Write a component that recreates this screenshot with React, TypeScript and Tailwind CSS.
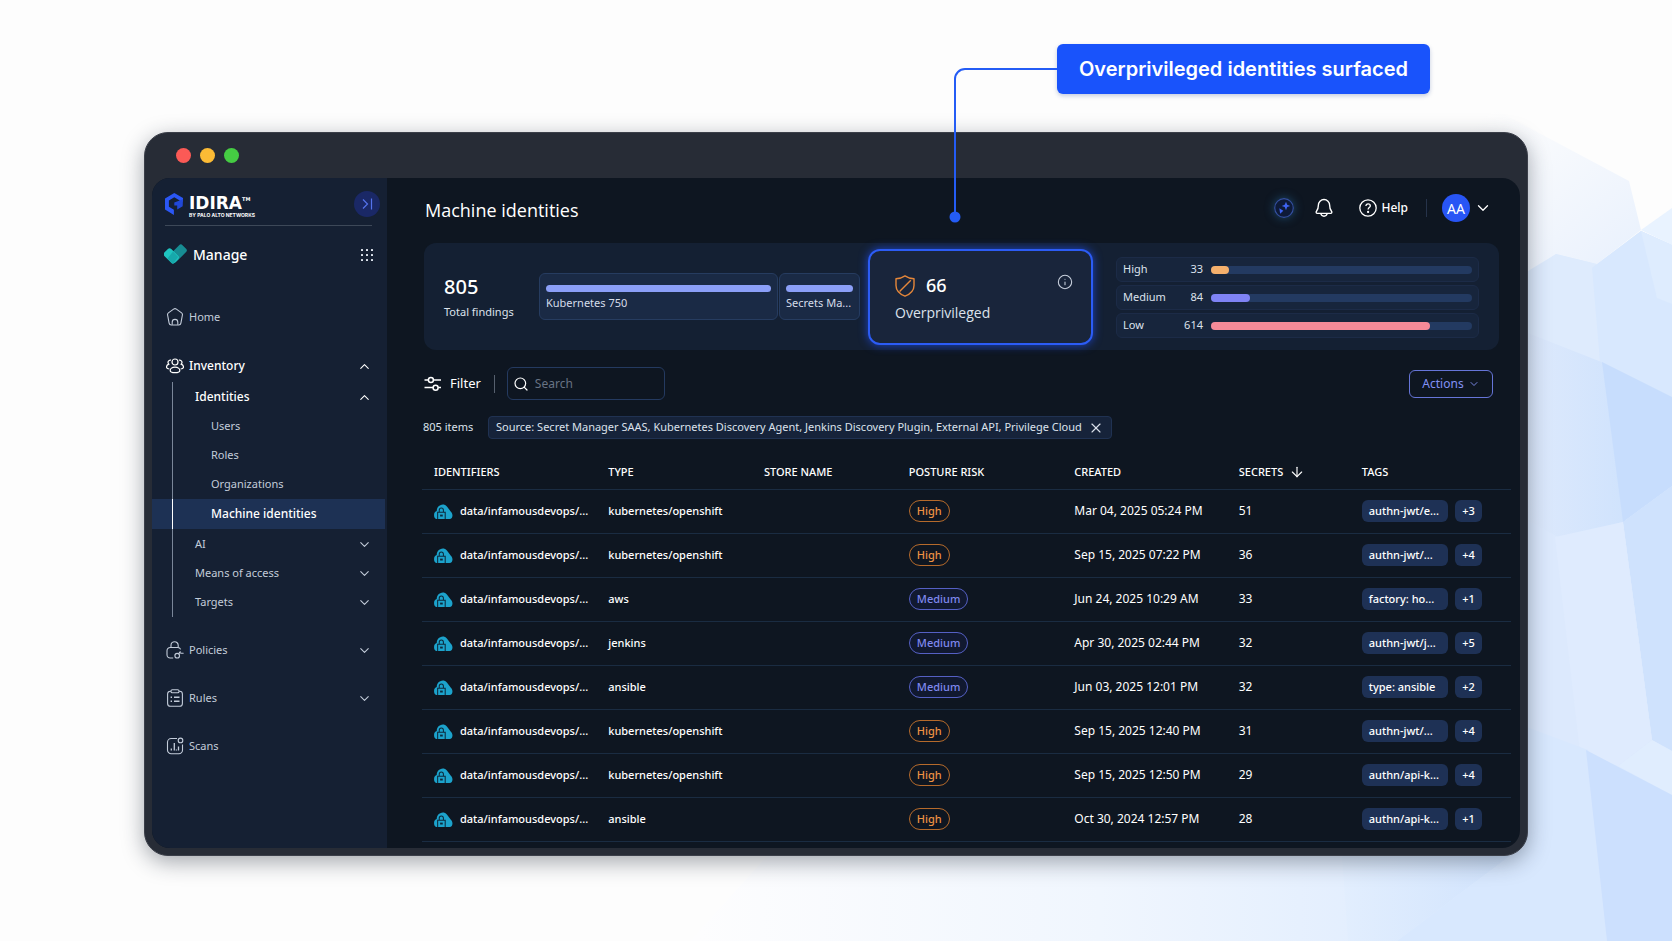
import React from 'react';
import { ArrowDown, ChevronDown, ChevronUp, Info, Search, X } from 'lucide-react';
import { clsx } from 'clsx';

type Risk = 'High' | 'Medium';

interface Identity {
  type: string;
  risk: Risk;
  created: string;
  secrets: number;
  tag: string;
  more: number;
}

const identities: Identity[] = [
  { type: 'kubernetes/openshift', risk: 'High', created: 'Mar 04, 2025 05:24 PM', secrets: 51, tag: 'authn-jwt/e...', more: 3 },
  { type: 'kubernetes/openshift', risk: 'High', created: 'Sep 15, 2025 07:22 PM', secrets: 36, tag: 'authn-jwt/...', more: 4 },
  { type: 'aws', risk: 'Medium', created: 'Jun 24, 2025 10:29 AM', secrets: 33, tag: 'factory: ho...', more: 1 },
  { type: 'jenkins', risk: 'Medium', created: 'Apr 30, 2025 02:44 PM', secrets: 32, tag: 'authn-jwt/j...', more: 5 },
  { type: 'ansible', risk: 'Medium', created: 'Jun 03, 2025 12:01 PM', secrets: 32, tag: 'type: ansible', more: 2 },
  { type: 'kubernetes/openshift', risk: 'High', created: 'Sep 15, 2025 12:40 PM', secrets: 31, tag: 'authn-jwt/...', more: 4 },
  { type: 'kubernetes/openshift', risk: 'High', created: 'Sep 15, 2025 12:50 PM', secrets: 29, tag: 'authn/api-k...', more: 4 },
  { type: 'ansible', risk: 'High', created: 'Oct 30, 2024 12:57 PM', secrets: 28, tag: 'authn/api-k...', more: 1 },
];

const severities = [
  { label: 'High', count: 33, percent: 7, bar: 'bg-[#f5b06c]' },
  { label: 'Medium', count: 84, percent: 15, bar: 'bg-[#7f83f5]' },
  { label: 'Low', count: 614, percent: 84, bar: 'bg-[#f58a98]' },
];

/* ---------- Icons ---------- */

const HomeIcon = () => (
  <svg viewBox="0 0 18 18" className="size-[18px] shrink-0" fill="none" stroke="currentColor" strokeWidth="1.1">
    <path d="M7.6 1.1a2.4 2.4 0 0 1 2.8 0l5.2 3.8a2 2 0 0 1 .8 2.1l-1.5 8.2a2.2 2.2 0 0 1-2.2 1.8H5.3a2.2 2.2 0 0 1-2.2-1.8L1.6 7a2 2 0 0 1 .8-2.1z" />
    <path d="M6.2 16.8v-2.6a2.8 2.8 0 0 1 5.6 0v2.6" />
  </svg>
);

const UsersIcon = () => (
  <svg viewBox="0 0 18 18" className="size-[18px] shrink-0" fill="none" stroke="currentColor" strokeWidth="1.2">
    <circle cx="9" cy="5" r="3" />
    <path d="M9 10.2c3 0 4.8 1.7 4.8 3.2S12 15.6 9 15.6s-4.8-.7-4.8-2.2 1.8-3.2 4.8-3.2z" />
    <path d="M5 3.2a2.3 2.3 0 0 0-2.2 3.9c-1.5.6-2.3 1.7-2.3 2.9 0 1.4 1.2 1.9 2.9 2M13 3.2a2.3 2.3 0 0 1 2.2 3.9c1.5.6 2.3 1.7 2.3 2.9 0 1.4-1.2 1.9-2.9 2" />
  </svg>
);

const PoliciesIcon = () => (
  <svg viewBox="0 0 18 18" className="size-[18px] shrink-0" fill="none" stroke="currentColor" strokeWidth="1.1">
    <path d="M5 6.5V4.3a3.6 3.6 0 0 1 7.2 0v2.2" />
    <path d="M7.2 17H4.2A3.2 3.2 0 0 1 1 13.8V9.700a3.2 3.2 0 0 1 3.2-3.2h7.600a3.2 3.2 0 0 1 2.900 1.900" />
    <circle cx="11.2" cy="14.7" r="2.3" />
    <path d="M12.5 12.8l2-2.5M13 11.6c1.5 0 1.8 1 4.6.6" />
  </svg>
);

const RulesIcon = () => (
  <svg viewBox="0 0 18 18" className="size-[18px] shrink-0" fill="none" stroke="currentColor" strokeWidth="1.1">
    <path d="M5 2.2h-.6a2.8 2.8 0 0 0-2.8 2.8v9.4a2.8 2.8 0 0 0 2.8 2.8h9.2a2.8 2.8 0 0 0 2.8-2.8V5a2.8 2.8 0 0 0-2.8-2.8H13" />
    <rect x="5" y="0.8" width="8" height="3" rx="1.3" />
    <path d="M8 8.3h5.5M8 12.2h5.5M4.6 8.3h1.4M4.6 12.2h1.4" strokeWidth="1.4" />
  </svg>
);

const ScansIcon = () => (
  <svg viewBox="0 0 18 18" className="size-[18px] shrink-0" fill="none" stroke="currentColor" strokeWidth="1.1">
    <path d="M11 1.5H5.2A3.7 3.7 0 0 0 1.5 5.2v7.9a3.7 3.7 0 0 0 3.7 3.7h7.6a3.7 3.7 0 0 0 3.7-3.7V7.5" />
    <circle cx="14.5" cy="3.4" r="2.3" />
    <path d="M5.3 11.5v2M8.3 6v7.5M12.5 9.500v4M10.400 12.500v1" strokeWidth="1.3" />
  </svg>
);

const CloudLockIcon = () => (
  <svg viewBox="0 0 20 18" className="h-[17px] w-[19px] shrink-0">
    <path
      d="M6.6 2.4A5 5 0 0 1 13.6 3.6l4.2 5.6c2.6 2.4 2.3 7.8-1.4 7.800H3.400C.7 17 0 14.600 0 12.600 0 10.400 1.300 9 2.800 8.600 2.800 5.600 4.200 3.300 6.600 2.400z"
      fill="#1ca3cc"
    />
    <path d="M5.5 9.5V7.5a2.2 2.2 0 0 1 4.4 0v2" fill="none" stroke="#0d2a3c" strokeWidth="1.1" />
    <path d="M3.8 17V9.9h8V17" fill="none" stroke="#0d2a3c" strokeWidth="1.1" />
    <rect x="6.4" y="12.3" width="2.8" height="2" fill="#0d2a3c" />
  </svg>
);

const FilterIcon = () => (
  <svg viewBox="0 0 18 16" className="h-4 w-[18px]" fill="none" stroke="currentColor" strokeWidth="1.5">
    <path d="M0.5 4h3.8M9.5 4H17M.5 11.5H9M14.2 11.5H17" />
    <circle cx="6.9" cy="4" r="2.5" />
    <circle cx="11.6" cy="11.7" r="2.5" />
  </svg>
);

const ShieldIcon = () => (
  <svg viewBox="0 0 20 22" className="h-[22px] w-5" fill="none" stroke="#e5873a" strokeWidth="1.4" strokeLinejoin="round">
    <path d="M10 .9c2.5 1.7 5.3 2.6 9 2.9v6.7c0 4.9-3.6 8.5-9 10.7-5.4-2.2-9-5.8-9-10.7V3.800c3.700-.3 6.500-1.200 9-2.900z" />
    <path d="M15.8 5.2L4.6 16.6" />
  </svg>
);

const BellIcon = () => (
  <svg viewBox="0 0 18 20" className="h-5 w-[18px]" fill="none" stroke="currentColor" strokeWidth="1.4" strokeLinejoin="round">
    <path d="M9 1.5a5.6 5.6 0 0 0-5.6 5.6c0 3.1-.6 4.7-1.9 6.2-.7.9-.3 2.1.9 2.1h13.2c1.2 0 1.6-1.2.9-2.1-1.3-1.5-1.9-3.1-1.9-6.2A5.6 5.6 0 0 0 9 1.5z" />
    <path d="M5.8 15.7a3.3 3.3 0 0 0 6.4 0" />
  </svg>
);

const HelpIcon = () => (
  <svg viewBox="0 0 18 18" className="size-[18px]" fill="none" stroke="currentColor" strokeWidth="1.3">
    <circle cx="9" cy="9" r="8.2" />
    <path d="M6.9 7.1c0-1.4.9-2.2 2.2-2.2s2.2.8 2.2 2c0 1.6-2.2 1.7-2.2 3.5" />
    <circle cx="9.1" cy="12.9" r="0.5" fill="currentColor" />
  </svg>
);

const SparkleIcon = () => (
  <svg viewBox="0 0 20 20" className="size-5">
    <circle cx="10" cy="10" r="9.3" fill="#0e1a38" stroke="#3450a0" strokeWidth="1.2" />
    <path d="M12 3.8l1.2 2.9 3 1.2-3 1.2-1.2 3.2-1.3-3.2-3-1.2 3-1.2z" fill="#3e63f2" />
    <path d="M5.3 10.3l4 2.5-3.1 2.9z" fill="#3e63f2" />
  </svg>
);

const GridDots = () => (
  <svg viewBox="0 0 13 13" className="size-[13px]" fill="#dfe5ef">
    {[1, 6, 11].map((y) =>
      [1, 6, 11].map((x) => <rect key={`${x}-${y}`} x={x} y={y} width="2" height="2" rx="0.5" />)
    )}
  </svg>
);

const IdiraMark = () => (
  <svg viewBox="0 0 18 22" className="h-[22px] w-[18px]">
    <path d="M9.3 0L18 5v3.3l-3.3 1.9V7.5L9.3 4.2 3.9 7.5v6.3l5 3V22L0 16.4V5.4z" fill="#2b57f5" />
    <path d="M9.3 9.6l5.4-2.1 3.3-1.2-.3 6.9-5.5 3.2v-3.800H9.300z" fill="#2148d8" />
  </svg>
);

const ManageMark = () => (
  <svg viewBox="0 0 23 20" className="h-5 w-[23px]">
    <rect x="4.500" y="4.600" width="18.500" height="9.800" rx="2.400" transform="rotate(-45 13.750 9.500)" fill="#178c93" />
    <rect x="0" y="7" width="14.500" height="9.800" rx="2.400" transform="rotate(45 7.250 11.900)" fill="#1fc4c0" />
    <path d="M9 7.600l5.200 5.300-4.500 6a2 2 0 0 1-2 0L3.400 14.600z" fill="#17a8ab" />
  </svg>
);

/* ---------- Backdrop ---------- */

const Backdrop = () => (
  <svg
    aria-hidden="true"
    viewBox="0 0 1672 941"
    preserveAspectRatio="none"
    className="absolute inset-0 h-full w-full"
  >
    <defs>
      <linearGradient id="floor" x1="700" y1="0" x2="1500" y2="0" gradientUnits="userSpaceOnUse">
        <stop offset="0" stopColor="#fdfdfe" />
        <stop offset="0.5" stopColor="#f0f6fe" />
        <stop offset="1" stopColor="#dceafe" />
      </linearGradient>
      <linearGradient id="shade" x1="1342" y1="0" x2="1500" y2="0" gradientUnits="userSpaceOnUse">
        <stop offset="0" stopColor="#e2eefe" />
        <stop offset="1" stopColor="#d2e4fd" />
      </linearGradient>
      <linearGradient id="peak" x1="1480" y1="120" x2="1600" y2="270" gradientUnits="userSpaceOnUse">
        <stop offset="0" stopColor="#fdfdfd" />
        <stop offset="1" stopColor="#ebf2fd" />
      </linearGradient>
      <linearGradient id="slope" x1="1528" y1="330" x2="1625" y2="330" gradientUnits="userSpaceOnUse">
        <stop offset="0" stopColor="#dde9fc" />
        <stop offset="1" stopColor="#d0e3fd" />
      </linearGradient>
    </defs>
    <rect width="1672" height="941" fill="#fdfdfd" />
    <polygon points="1440,80 1629,181 1641,230 1597,264 1556,254 1500,290" fill="url(#peak)" />
    <polygon points="690,941 800,820 1400,820 1528,273 1556,254 1597,264 1641,231 1672,245 1672,941" fill="url(#floor)" />
    <polygon points="1500,282 1528,271 1556,254 1597,264 1600,362 1500,330" fill="#deebfd" />
    <polygon points="1641,230 1672,208 1672,245" fill="#e9f3ff" />
    <polygon points="1592,268 1641,231 1672,245 1672,397 1600,362" fill="#d8e8fe" />
    <polygon points="1641,231 1672,245 1672,304 1657,298" fill="#deecfe" />
    <polygon points="1500,322 1604,363 1625,524 1500,560" fill="url(#slope)" />
    <polygon points="1602,362 1672,397 1672,486 1623,522" fill="#c7ddfd" />
    <polygon points="1623,522 1672,486 1672,751 1652,740" fill="#cfe2fd" />
    <polygon points="1500,505 1560,538 1623,522 1652,740 1618,766 1500,722" fill="#dce9fd" />
    <polygon points="1555,537 1623,522 1652,740 1618,766 1580,752" fill="#dfebfe" />
    <polygon points="1652,740 1672,751 1672,795 1618,766" fill="#e0edfe" />
    <polygon points="1342,856 1510,856 1397,941 1348,941" fill="url(#shade)" />
    <polygon points="1500,717 1588,750 1607,941 1397,941 1510,856" fill="#d8e8fe" />
    <polygon points="1586,750 1672,795 1672,941 1607,941" fill="#cce0fe" />
  </svg>
);

/* ---------- Sidebar ---------- */

interface NavItemProps {
  icon: React.ReactNode;
  label: string;
  active?: boolean;
  chevron?: 'up' | 'down';
}

const Chevron = ({ dir }: { dir: 'up' | 'down' }) =>
  dir === 'up' ? (
    <ChevronUp className="ml-auto size-[15px]" strokeWidth={1.7} />
  ) : (
    <ChevronDown className="ml-auto size-[15px]" strokeWidth={1.7} />
  );

const NavItem = ({ icon, label, active, chevron }: NavItemProps) => (
  <a
    href="#"
    className={clsx(
      'flex h-[30px] items-center gap-[5px] pr-[15px] pl-[14px]',
      active ? 'text-[12px] font-medium text-white' : 'text-[11px] text-[#c3ccda]'
    )}
  >
    {icon}
    {label}
    {chevron && <Chevron dir={chevron} />}
  </a>
);

interface SubItemProps {
  label: string;
  nested?: boolean;
  bold?: boolean;
  selected?: boolean;
  chevron?: 'up' | 'down';
  tall?: boolean;
}

const SubItem = ({ label, nested, bold, selected, chevron, tall }: SubItemProps) => (
  <li className={clsx('mr-[2px] pl-5', selected && 'bg-[#1d3154]')}>
    <a
      href="#"
      aria-current={selected ? 'page' : undefined}
      className={clsx(
        'flex items-center border-l pr-[13px]',
        tall ? 'h-[30px]' : 'h-[29px]',
        nested ? 'pl-[38px]' : 'pl-[22px]',
        selected ? 'border-white' : 'border-[#7a8699]',
        bold ? 'text-[12px] font-medium text-white' : 'text-[11px] text-[#c3ccda]'
      )}
    >
      {label}
      {chevron && <Chevron dir={chevron} />}
    </a>
  </li>
);

const Sidebar = () => (
  <aside className="w-[235px] shrink-0 bg-[#152033]">
    <div className="mr-[15px] ml-[13px] flex h-12 items-center border-b border-[#3d4858] pt-1">
      <IdiraMark />
      <div className="ml-[6px] pt-[6px] font-['DejaVu_Sans'] font-bold text-white">
        <div className="flex items-start text-[17px] leading-[14px]">
          IDIRA<span className="text-[5px] leading-[6px]">TM</span>
        </div>
        <div className="mt-[2px] font-['Inter'] text-[5px] leading-[6px] whitespace-nowrap">BY PALO ALTO NETWORKS</div>
      </div>
      <button
        type="button"
        aria-label="Expand sidebar"
        className="-mr-2 ml-auto flex size-[26px] items-center justify-center rounded-full bg-[#1a2866] text-[#5573ec]"
      >
        <svg viewBox="0 0 12 12" className="size-3" fill="none" stroke="currentColor" strokeWidth="1.2">
          <path d="M2 1.5l4.5 4.5L2 10.5M10.5.5v11" />
        </svg>
      </button>
    </div>
    <div className="mt-[13px] mr-[14px] ml-3 flex h-[30px] items-center gap-[6px]">
      <ManageMark />
      <span className="text-[14px] font-medium text-white">Manage</span>
      <button type="button" aria-label="Switch service" className="ml-auto">
        <GridDots />
      </button>
    </div>
    <nav className="mt-[33px]">
      <NavItem icon={<HomeIcon />} label="Home" />
      <div className="mt-[19px]">
        <NavItem icon={<UsersIcon />} label="Inventory" active chevron="up" />
        <ul className="pt-px">
          <SubItem label="Identities" bold tall chevron="up" />
          <SubItem label="Users" nested />
          <SubItem label="Roles" nested />
          <SubItem label="Organizations" nested />
          <SubItem label="Machine identities" nested bold selected tall />
          <SubItem label="AI" tall chevron="down" />
          <SubItem label="Means of access" chevron="down" />
          <SubItem label="Targets" chevron="down" />
        </ul>
      </div>
      <div className="mt-[18px] flex flex-col gap-[18px]">
        <NavItem icon={<PoliciesIcon />} label="Policies" chevron="down" />
        <NavItem icon={<RulesIcon />} label="Rules" chevron="down" />
        <NavItem icon={<ScansIcon />} label="Scans" />
      </div>
    </nav>
  </aside>
);

/* ---------- Main area ---------- */

const TopBar = () => (
  <header className="flex h-[60px] items-center pr-7 pl-[38px] text-white">
    <h1 className="pt-1 font-['Open_Sans'] text-[18px]">Machine identities</h1>
    <div className="ml-auto flex items-center">
      <button type="button" aria-label="Assistant" className="rounded-full shadow-[0_0_10px_#1d4a6e]">
        <SparkleIcon />
      </button>
      <button type="button" aria-label="Notifications" className="ml-[21px]">
        <BellIcon />
      </button>
      <button type="button" className="ml-[26px] flex items-center gap-1 text-[12px] font-medium">
        <HelpIcon />
        Help
      </button>
      <span className="ml-[18px] h-[18px] w-px bg-[#26334a]" />
      <button type="button" className="ml-[15px] flex items-center gap-1">
        <span className="flex size-7 items-center justify-center rounded-full bg-[#2855f5] text-[14px]">AA</span>
        <ChevronDown className="size-[18px]" strokeWidth={1.7} />
      </button>
    </div>
  </header>
);

const SourceBar = ({ label, className }: { label: string; className: string }) => (
  <div
    className={clsx(
      'flex h-[47px] min-w-0 flex-col rounded-md border border-[#263c60] bg-[#1a2a45] px-[6px] pt-[11px] text-[11px] text-[#d5dcea]',
      className
    )}
  >
    <span className="h-[7px] shrink-0 rounded-full bg-[#8b9ff8]" />
    <span className="mt-[3px] leading-4 whitespace-nowrap">{label}</span>
  </div>
);

const Summary = () => (
  <section className="mt-[5px] mr-[21px] ml-[37px] flex h-[107px] items-center rounded-xl bg-[#142033] pr-5 pl-5">
    <div className="w-[95px] shrink-0 pt-1">
      <div className="text-[20px] leading-6 font-medium text-white">805</div>
      <div className="mt-[3px] text-[11px] leading-5 text-[#dce2ec]">Total findings</div>
    </div>
    <div className="grid flex-1 grid-cols-[240fr_89fr_248fr_363fr] items-center">
      <SourceBar label="Kubernetes 750" className="mr-px" />
      <SourceBar label="Secrets Ma..." className="mr-2" />
      <div className="mr-[23px] h-24 rounded-xl border-2 border-[#2c5cf5] bg-[#19253b] pt-[23px] pr-[18px] pl-[25px] shadow-[0_0_10px_#1c44c8]">
        <div className="flex h-6 items-center">
          <ShieldIcon />
          <span className="ml-[11px] text-[18px] font-medium text-white">66</span>
          <button type="button" aria-label="About overprivileged identities" className="ml-auto self-start text-[#c9d1de]">
            <Info className="size-4" strokeWidth={1.6} />
          </button>
        </div>
        <div className="mt-[5px] font-['Open_Sans'] text-[14px] leading-5 text-[#dce2ec]">Overprivileged</div>
      </div>
      <div className="flex flex-col gap-[3px] pt-[2px]">
        {severities.map((item) => (
          <div
            key={item.label}
            className="flex h-[25px] items-center rounded-md border border-[#1c2b47] bg-[#17253c] px-[6px] text-[11px] text-[#dce2ec]"
          >
            <span className="w-[50px]">{item.label}</span>
            <span className="w-[30px] text-right">{item.count}</span>
            <span className="ml-2 h-2 flex-1 rounded-full bg-[#233a61]">
              <span className={clsx('block h-2 rounded-full', item.bar)} style={{ width: `${item.percent}%` }} />
            </span>
          </div>
        ))}
      </div>
    </div>
  </section>
);

const Toolbar = () => (
  <div className="mt-[17px] mr-[27px] ml-[37px] flex h-[33px] items-center">
    <button type="button" className="flex items-center gap-2 text-[13px] text-white">
      <FilterIcon />
      Filter
    </button>
    <span className="ml-[13px] h-[18px] w-px bg-[#56606e]" />
    <label className="ml-3 flex h-[33px] w-[158px] items-center gap-[6px] rounded-md border border-[#243a60] px-[5px]">
      <Search className="size-4 shrink-0 text-white" strokeWidth={1.8} />
      <input
        type="text"
        aria-label="Search"
        placeholder="Search"
        className="w-full min-w-0 bg-transparent text-[12px] text-white outline-none placeholder:text-[#687384]"
      />
    </label>
    <button
      type="button"
      className="ml-auto flex h-7 w-[84px] items-center justify-center gap-1 rounded-md border border-[#6675d8] text-[12px] text-[#8291f5]"
    >
      Actions
      <ChevronDown className="size-3" strokeWidth={1.8} />
    </button>
  </div>
);

const Filters = () => (
  <div className="mt-4 ml-9 flex h-[23px] items-center text-[11px] text-[#dce2ec]">
    <span className="w-[65px]">805 items</span>
    <span className="flex h-[23px] items-center gap-[6px] rounded border border-[#203252] bg-[#16233a] px-[7px] whitespace-nowrap">
      Source: Secret Manager SAAS, Kubernetes Discovery Agent, Jenkins Discovery Plugin, External API, Privilege Cloud
      <button type="button" aria-label="Remove source filter">
        <X className="size-4" strokeWidth={1.7} />
      </button>
    </span>
  </div>
);

const RiskBadge = ({ risk }: { risk: Risk }) => (
  <span
    className={clsx(
      'inline-flex h-[22px] items-center rounded-full border px-[7px] text-[11px]',
      risk === 'High' ? 'border-[#b56a2b] text-[#ec9244]' : 'border-[#5560c4] bg-[#111930] text-[#7f88ee]'
    )}
  >
    {risk}
  </span>
);

const IdentityTable = () => (
  <div className="mt-4 mr-[9px] ml-[35px]">
    <table className="w-full table-fixed text-left text-[11px] text-white">
      <colgroup>
        <col className="w-[16%]" />
        <col className="w-[14.3%]" />
        <col className="w-[13.3%]" />
        <col className="w-[15.2%]" />
        <col className="w-[15.1%]" />
        <col className="w-[11.3%]" />
        <col className="w-[14.8%]" />
      </colgroup>
      <thead>
        <tr className="h-[34px] border-b border-[#1a2c42]">
          <th className="pl-3 font-medium">IDENTIFIERS</th>
          <th className="pl-3 font-medium">TYPE</th>
          <th className="pl-3 font-medium">STORE NAME</th>
          <th className="pl-3 font-medium">POSTURE RISK</th>
          <th className="pl-3 font-medium">CREATED</th>
          <th className="pl-3 font-medium" aria-sort="descending">
            <button type="button" className="flex items-center gap-[6px]">
              SECRETS
              <ArrowDown className="size-4" strokeWidth={1.7} />
            </button>
          </th>
          <th className="pl-3 font-medium">TAGS</th>
        </tr>
      </thead>
      <tbody className="font-medium">
        {identities.map((row, index) => (
          <tr key={index} className="h-11 border-b border-[#1a2c42]">
            <td className="pl-3">
              <a href="#" className="flex items-center gap-[7px] whitespace-nowrap">
                <CloudLockIcon />
                data/infamousdevops/...
              </a>
            </td>
            <td className="pl-3">{row.type}</td>
            <td className="pl-3" />
            <td className="pl-3">
              <RiskBadge risk={row.risk} />
            </td>
            <td className="pl-3 text-[12px] font-normal whitespace-nowrap">{row.created}</td>
            <td className="pl-3 text-[12px] font-normal">{row.secrets}</td>
            <td className="pl-3">
              <span className="flex w-[120px] gap-[7px] whitespace-nowrap">
                <span className="flex h-[22px] flex-1 items-center rounded-md bg-[#1e3155] px-[7px]">{row.tag}</span>
                <span className="flex h-[22px] items-center rounded-md bg-[#1e3155] px-[7px]">+{row.more}</span>
              </span>
            </td>
          </tr>
        ))}
      </tbody>
    </table>
  </div>
);

/* ---------- Callout ---------- */

const Callout = () => (
  <div className="relative z-10 flex h-[50px] items-center rounded-md bg-[#1953fb] px-[22px] font-['Inter'] text-[20px] font-semibold whitespace-nowrap text-white shadow-[0_2px_4px_#1a3a8a40]">
    Overprivileged identities surfaced
    <svg
      viewBox="0 0 108 180"
      className="absolute top-6 right-full h-[180px] w-[108px]"
      fill="none"
      stroke="#245cf5"
      strokeWidth="2"
    >
      <path d="M108 1H16A10 10 0 0 0 6 11V148" />
      <circle cx="6" cy="149" r="5.5" fill="#245cf5" stroke="none" />
    </svg>
  </div>
);

export default function App() {
  return (
    <div className="relative min-h-screen overflow-hidden font-['Noto_Sans','Open_Sans',sans-serif]">
      <Backdrop />
      <div className="relative px-36 pt-11 pb-[85px]">
        <div className="flex justify-end pr-[98px]">
          <Callout />
        </div>
        <div className="mt-[38px] rounded-[24px] border border-[#3b3f49] bg-[#272c36] px-[7px] pb-[7px] shadow-[0_6px_22px_#1c253466]">
          <div className="flex h-[45px] items-center gap-[9px] pl-6">
            <span className="size-[15px] rounded-full bg-[#fb5a56]" />
            <span className="size-[15px] rounded-full bg-[#fcbb35]" />
            <span className="size-[15px] rounded-full bg-[#45cc43]" />
          </div>
          <div className="flex overflow-hidden rounded-[18px] bg-[#0e1621]">
            <Sidebar />
            <main className="min-w-0 flex-1 pb-[6px]">
              <TopBar />
              <Summary />
              <Toolbar />
              <Filters />
              <IdentityTable />
            </main>
          </div>
        </div>
      </div>
    </div>
  );
}
